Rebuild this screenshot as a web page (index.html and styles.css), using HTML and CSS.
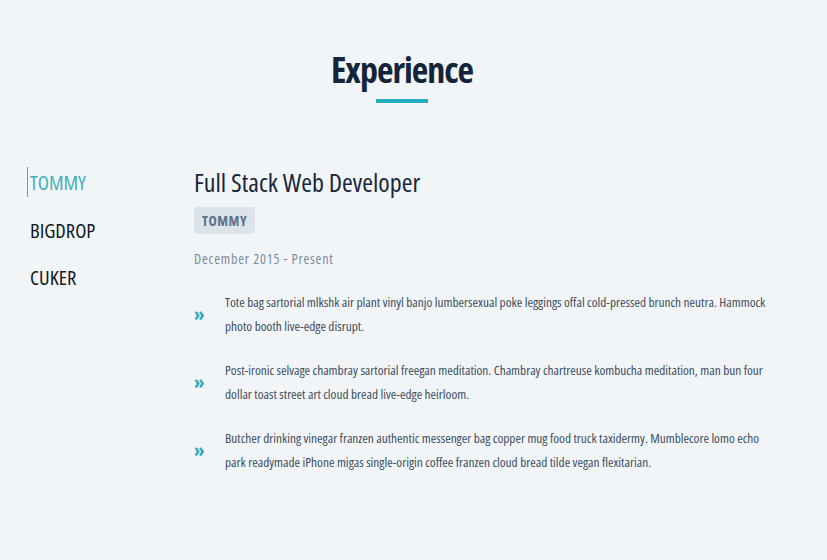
FILE: index.html
```html
<!DOCTYPE html>
<html lang="en">
<head>
<meta charset="utf-8">
<title>Experience</title>
<link rel="stylesheet" href="styles.css">
</head>
<body>
<section class="experience">
  <header class="heading">
    <h2 class="heading-title">Experience</h2>
    <div class="heading-bar"></div>
  </header>
  <div class="jobs">
    <nav class="tabs">
      <a class="tab tab-active">TOMMY</a>
      <a class="tab">BIGDROP</a>
      <a class="tab">CUKER</a>
    </nav>
    <article class="job">
      <h3 class="job-title">Full Stack Web Developer</h3>
      <span class="job-badge">TOMMY</span>
      <p class="job-date">December 2015 - Present</p>
      <ul class="duties">
        <li class="duty"><span class="duty-icon">&raquo;</span><span class="duty-text">Tote bag sartorial mlkshk air plant vinyl banjo lumbersexual poke leggings offal cold-pressed brunch neutra. Hammock photo booth live-edge disrupt.</span></li>
        <li class="duty"><span class="duty-icon">&raquo;</span><span class="duty-text">Post-ironic selvage chambray sartorial freegan meditation. Chambray chartreuse kombucha meditation, man bun four dollar toast street art cloud bread live-edge heirloom.</span></li>
        <li class="duty"><span class="duty-icon">&raquo;</span><span class="duty-text">Butcher drinking vinegar franzen authentic messenger bag copper mug food truck taxidermy. Mumblecore lomo echo park readymade iPhone migas single-origin coffee franzen cloud bread tilde vegan flexitarian.</span></li>
      </ul>
    </article>
  </div>
</section>
</body>
</html>
```
FILE: styles.css
```css
html, body {
  margin: 0;
  background: #f2f5f8;
}
body {
  font-family: "Open Sans", "DejaVu Sans", sans-serif;
  font-stretch: 75%;
  color: #1b2a3d;
}
.experience {
  padding-top: 45px;
}
.heading {
  display: flex;
  flex-direction: column;
  align-items: center;
  padding-right: 23px;
}
.heading-title {
  margin: 0;
  font-size: 36px;
  font-weight: 700;
  letter-spacing: -1px;
  line-height: 50px;
  color: #14253b;
}
.heading-bar {
  width: 52px;
  height: 4px;
  margin-top: 4px;
  background: #26adbd;
}
.jobs {
  display: flex;
  margin-top: 64px;
  padding-left: 27px;
}
.tabs {
  width: 167px;
  display: flex;
  flex-direction: column;
  gap: 17.5px;
}
.tab {
  display: block;
  height: 30px;
  line-height: 30px;
  padding-left: 2px;
  border-left: 1.5px solid transparent;
  font-size: 20.5px;
  color: #111a26;
}
.tab-active {
  color: #3fb0c0;
  border-left-color: #3fb0c0;
}
.job {
  width: 586px;
}
.job-title {
  margin: -2px 0 0;
  font-size: 26px;
  font-weight: 400;
  line-height: 34px;
  color: #17263a;
}
.job-badge {
  display: inline-block;
  margin-top: 8px;
  padding: 0 8px;
  height: 27px;
  line-height: 27px;
  border-radius: 3px;
  background: #dce3eb;
  font-size: 14px;
  font-weight: 700;
  letter-spacing: 0.5px;
  color: #5c7189;
}
.job-date {
  margin: 15px 0 0;
  font-size: 14px;
  line-height: 20px;
  letter-spacing: 0.8px;
  color: #7b8c9e;
}
.duties {
  list-style: none;
  margin: 21px 0 0;
  padding: 0;
  display: flex;
  flex-direction: column;
  gap: 20px;
}
.duty {
  display: flex;
  align-items: center;
}
.duty-icon {
  width: 31px;
  flex: none;
  font-size: 20px;
  font-weight: 700;
  color: #2aaabb;
  line-height: 24px;
}
.duty-text {
  font-size: 13.3px;
  line-height: 24px;
  color: #3c4d60;
}
```
